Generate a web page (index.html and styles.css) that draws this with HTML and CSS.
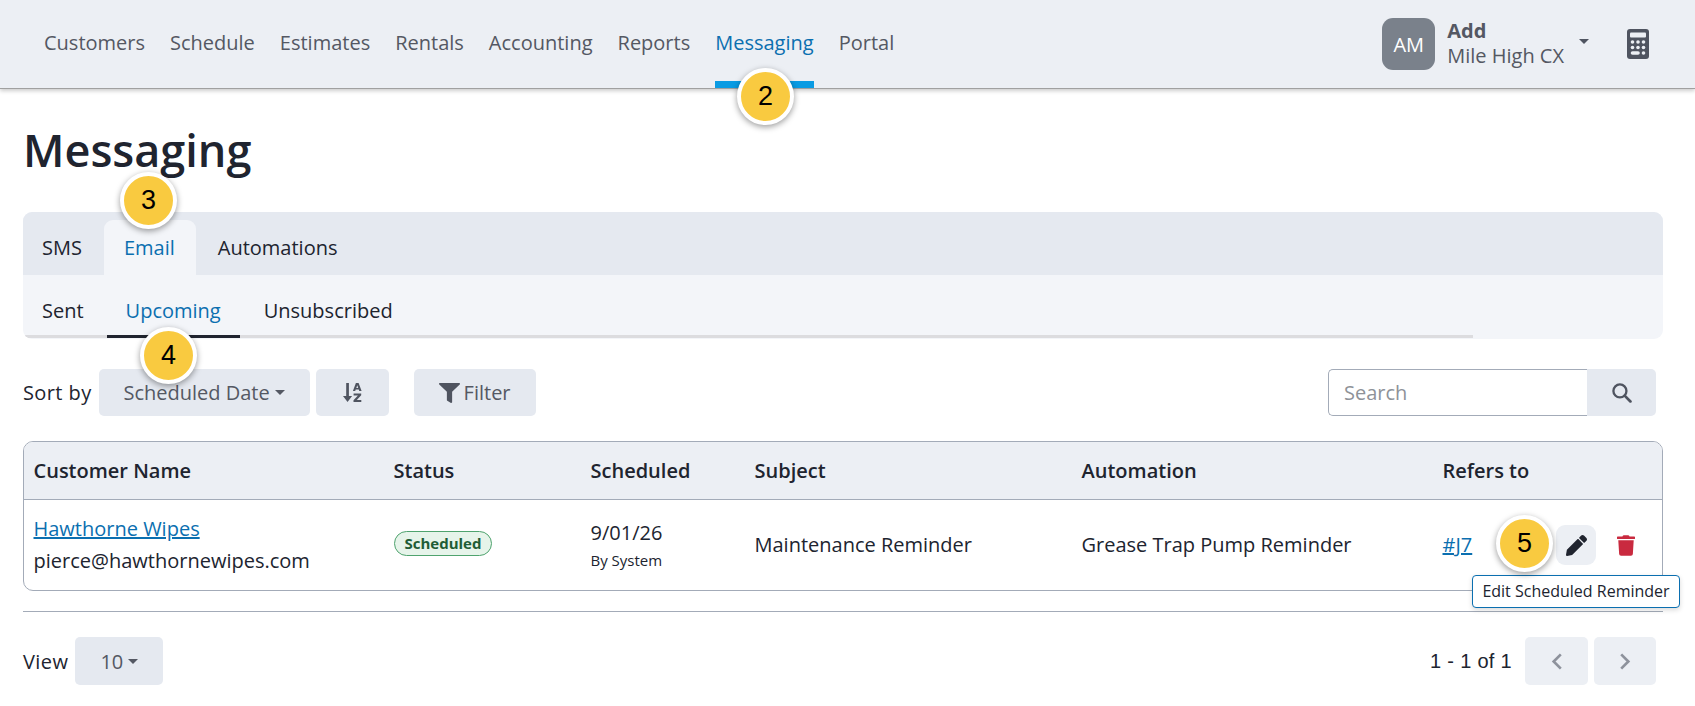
FILE: index.html
```html
<!DOCTYPE html>
<html lang="en">
<head>
<meta charset="utf-8">
<title>Messaging</title>
<link rel="stylesheet" href="styles.css">
</head>
<body>
<header class="topbar">
  <nav class="mainnav">
    <a class="navlink">Customers</a>
    <a class="navlink">Schedule</a>
    <a class="navlink">Estimates</a>
    <a class="navlink">Rentals</a>
    <a class="navlink">Accounting</a>
    <a class="navlink">Reports</a>
    <a class="navlink active">Messaging</a>
    <a class="navlink">Portal</a>
  </nav>
  <div class="account">
    <div class="avatar">AM</div>
    <div class="who"><strong>Add</strong><span>Mile High CX</span></div>
    <span class="caret acct-caret"></span>
    <svg class="calc" viewBox="0 0 22 30"><rect width="22" height="30" rx="3" fill="#4f5460"/><rect x="3" y="3.500" width="16" height="5" rx="1" fill="#eceff4"/><g fill="#eceff4"><circle cx="5.500" cy="13" r="1.800"/><circle cx="11" cy="13" r="1.800"/><circle cx="16.500" cy="13" r="1.800"/><circle cx="5.500" cy="18.500" r="1.800"/><circle cx="11" cy="18.500" r="1.800"/><circle cx="16.500" cy="18.500" r="1.800"/><rect x="3.700" y="22.200" width="9.100" height="3.600" rx="1.800"/><circle cx="16.500" cy="24" r="1.800"/></g></svg>
  </div>
</header>

<main class="page">
  <h1 class="title">Messaging</h1>

  <section class="tabpanel">
    <div class="tabs">
      <a class="tab">SMS</a>
      <a class="tab active">Email</a>
      <a class="tab">Automations</a>
    </div>
    <div class="subtabs">
      <a class="subtab">Sent</a>
      <a class="subtab active">Upcoming</a>
      <a class="subtab">Unsubscribed</a>
    </div>
  </section>

  <div class="toolbar">
    <span class="label">Sort by</span>
    <button class="btn sortsel">Scheduled Date<span class="caret"></span></button>
    <button class="btn sortdir">
      <svg class="ico-sort" viewBox="0 0 19 19"><path fill="#4f5460" d="M3.200 0h2.700v13h3.200l-4.550 6L0 13h3.200z"/><path fill="#4f5460" fill-rule="evenodd" d="M12.900 0h2.700l3 8h-2.300l-.5-1.400h-3.100l-.5 1.400h-2.300zm1.350 2.300-.95 2.600h1.900zM10.600 10.500h7.600v1.800l-4.400 4.600h4.500V19h-7.800v-1.800l4.400-4.600h-4.300z"/></svg>
    </button>
    <button class="btn filter">
      <svg class="ico-filter" viewBox="0 0 512 512" preserveAspectRatio="none"><path fill="#4f5460" d="M487.976 0H24.028C2.710 0-8.047 25.866 7.058 40.971L192 225.941V432c0 7.831 3.821 15.170 10.237 19.662l80 55.980C298.020 518.690 320 507.493 320 487.980V225.941l184.947-184.970C520.021 25.896 509.338 0 487.976 0z"/></svg>
      Filter
    </button>
    <div class="search">
      <input class="search-input" placeholder="Search">
      <button class="search-btn">
        <svg class="ico-search" viewBox="0 0 20 20"><circle cx="8.500" cy="8.500" r="6.200" fill="none" stroke="#4f5460" stroke-width="2.200"/><path d="M13 13l5.500 5.500" stroke="#4f5460" stroke-width="2.600" stroke-linecap="round"/></svg>
      </button>
    </div>
  </div>

  <div class="tablewrap">
    <div class="row head">
      <div>Customer Name</div>
      <div>Status</div>
      <div>Scheduled</div>
      <div>Subject</div>
      <div>Automation</div>
      <div>Refers to</div>
    </div>
    <div class="row body">
      <div class="cust"><a class="link">Hawthorne Wipes</a><span>pierce@hawthornewipes.com</span></div>
      <div class="badgecell"><span class="badge">Scheduled</span></div>
      <div class="sched"><span>9/01/26</span><small>By System</small></div>
      <div>Maintenance Reminder</div>
      <div>Grease Trap Pump Reminder</div>
      <div class="refs">
        <a class="link">#J7</a>
        <span class="iconbtn edit">
          <svg class="ico-pencil" viewBox="0 0 512 512"><path fill="#20242f" d="M497.900 142.100l-46.100 46.100c-4.700 4.700-12.300 4.700-17 0l-111-111c-4.700-4.700-4.700-12.300 0-17l46.100-46.100c18.700-18.700 49.100-18.700 67.900 0l60.100 60.100c18.800 18.700 18.800 49.100 0 67.900zM284.200 99.800L21.600 362.400.4 483.900c-2.900 16.400 11.400 30.600 27.800 27.800l121.500-21.300 262.600-262.600c4.700-4.700 4.700-12.300 0-17l-111-111c-4.800-4.700-12.400-4.700-17.100 0z"/></svg>
        </span>
        <span class="iconbtn trash">
          <svg class="ico-trash" viewBox="0 0 448 512"><path fill="#c92a3f" d="M432 32H312l-9.400-18.700A24 24 0 0 0 281.100 0H166.800a23.700 23.700 0 0 0-21.400 13.300L136 32H16A16 16 0 0 0 0 48v32a16 16 0 0 0 16 16h416a16 16 0 0 0 16-16V48a16 16 0 0 0-16-16zM53.200 467a48 48 0 0 0 47.900 45h245.800a48 48 0 0 0 47.900-45L416 128H32z"/></svg>
        </span>
      </div>
    </div>
  </div>

  <hr class="rule">

  <div class="pager">
    <span class="label">View</span>
    <button class="btn viewsel">10<span class="caret"></span></button>
    <span class="range">1 - 1 of 1</span>
    <button class="pagebtn prev"><svg class="ico-chev" viewBox="0 0 12 20"><path d="M10 2.500 2.500 10l7.500 7.500" fill="none" stroke="#8e929c" stroke-width="2.800"/></svg></button>
    <button class="pagebtn next"><svg class="ico-chev" viewBox="0 0 12 20"><path d="M2 2.500 9.500 10 2 17.500" fill="none" stroke="#8e929c" stroke-width="2.800"/></svg></button>
  </div>
</main>

<div class="tooltip">Edit Scheduled Reminder</div>
<span class="callout c2">2</span>
<span class="callout c3">3</span>
<span class="callout c4">4</span>
<span class="callout c5">5</span>
</body>
</html>
```
FILE: styles.css
```css
* { box-sizing: border-box; }
html, body { margin: 0; padding: 0; }
body {
  background: #fff;
  color: #20242f;
  font-family: "Open Sans", "Liberation Sans", sans-serif;
  font-size: 20px;
  width: 1695px;
  height: 706px;
  overflow: hidden;
  position: relative;
}
button { font-family: inherit; border: 0; margin: 0; cursor: pointer; }

.topbar {
  height: 89px;
  background: #eceff4;
  border-bottom: 1px solid #a0a0a0;
  box-shadow: 0 2px 4px rgba(0,0,0,.2);
  display: flex;
  justify-content: space-between;
  padding-left: 44px;
}
.mainnav { display: flex; gap: 25px; }
.navlink {
  color: #545863;
  padding-top: 29px;
  height: 88px;
  line-height: 28px;
  border-bottom: 7px solid transparent;
}
.navlink.active { color: #0b6fb0; border-bottom-color: #0a9be3; }

.account { display: flex; align-items: flex-start; padding-top: 18px; padding-right: 46px; }
.avatar {
  width: 53px; height: 52px;
  background: #7a818b;
  color: #fff;
  border-radius: 11px;
  display: flex; align-items: center; justify-content: center;
  font-size: 20px;
  margin-right: 12px;
}
.who { display: flex; flex-direction: column; color: #545863; line-height: 25px; }
.who strong { font-weight: 700; }
.caret {
  display: inline-block;
  width: 0; height: 0;
  border-left: 5px solid transparent;
  border-right: 5px solid transparent;
  border-top: 5px solid currentColor;
}
.acct-caret { color: #4f5460; margin: 21px 0 0 15px; }
.calc { width: 22px; height: 30px; margin: 11px 0 0 38px; }

.page { padding: 0 32px 0 23px; }
.title {
  font-size: 45px;
  font-weight: 600;
  line-height: 62px;
  margin: 30px 0 0;
  color: #20242f;
}

.tabpanel {
  margin-top: 31px;
  width: 1640px;
  height: 127px;
  background: #f3f5f9;
  border-radius: 9px;
  overflow: hidden;
}
.tabs {
  height: 63px;
  background: #e5e9f0;
  display: flex;
  align-items: flex-end;
}
.tab {
  height: 55px;
  padding: 13px 21px 0 20px;
  line-height: 30px;
  color: #20242f;
  border-radius: 9px 9px 0 0;
}
.tab.active { background: #f3f5f9; color: #0b6fb0; }
.tab:first-child { padding-left: 19px; padding-right: 22px; }
.tab:last-child { padding-left: 22px; }
.subtabs {
  display: flex;
  height: 63px;
  width: 1450px;
  border-bottom: 3px solid #dcdcdf;
}
.subtab {
  height: 63px;
  padding: 22px 19px 0;
  line-height: 28px;
  color: #20242f;
}
.subtab:first-child { padding-right: 23px; }
.subtab.active { color: #0b6fb0; border-bottom: 3px solid #20242f; margin-right: 5px; }

.toolbar {
  margin-top: 30px;
  display: flex;
  align-items: center;
  height: 47px;
  width: 1633px;
}
.label { color: #20242f; letter-spacing: .4px; }
.btn {
  background: #e5e9f0;
  color: #545863;
  font-size: 20px;
  height: 47px;
  border-radius: 5px;
  display: inline-flex;
  align-items: center;
  justify-content: center;
}
.btn .caret { margin-left: 5px; }
.sortsel { width: 211px; margin-left: 7px; }
.sortdir { width: 73px; margin-left: 6px; }
.filter { width: 122px; margin-left: 25px; gap: 4px; }
.ico-sort { width: 19px; height: 19px; }
.ico-filter { width: 21px; height: 20px; }
.search { margin-left: auto; display: flex; height: 47px; }
.search-input {
  width: 259px; height: 47px;
  border: 1px solid #a3abb8;
  border-right: 0;
  border-radius: 5px 0 0 5px;
  padding: 0 15px;
  font: 20px "Open Sans", sans-serif;
  color: #20242f;
  background: #fff;
  outline: 0;
}
.search-input::placeholder { color: #8e9298; opacity: 1; }
.search-btn {
  width: 69px; height: 47px;
  background: #e5e9f0;
  border-radius: 0 5px 5px 0;
  display: flex; align-items: center; justify-content: center;
}
.ico-search { width: 21px; height: 21px; }

.tablewrap {
  margin-top: 25px;
  width: 1640px;
  height: 150px;
  border: 1px solid #a3abb8;
  border-radius: 10px;
  overflow: hidden;
}
.row {
  display: grid;
  grid-template-columns: 360px 197px 164px 327px 361px 1fr;
  padding-left: 9.500px;
  align-items: center;
}
.row.head {
  height: 58px;
  background: #eceff4;
  border-bottom: 1px solid #a3abb8;
  font-weight: 600;
}
.row.body { height: 90px; padding-bottom: 2px; }
.cust { display: flex; flex-direction: column; line-height: 32px; padding-top: 2px; }
.link { color: #0b6fb0; text-decoration: underline; }
.badgecell { display: flex; padding-bottom: 1px; }
.badge {
  display: inline-block;
  height: 25px;
  line-height: 23px;
  padding: 0 10px;
  border: 1px solid #4fa36e;
  border-radius: 13px;
  background: #e6f4ea;
  color: #1f5c36;
  font-size: 15px;
  font-weight: 700;
}
.sched { display: flex; flex-direction: column; line-height: 28px; padding-top: 4px; }
.sched small { font-size: 15px; color: #20242f; line-height: 26px; }
.refs { display: flex; align-items: center; padding-top: 2px; }
.refs .link { margin-bottom: 2px; }
.iconbtn {
  width: 40px; height: 40px;
  border-radius: 9px;
  display: flex; align-items: center; justify-content: center;
}
.edit { background: #eceff4; margin-left: 84px; }
.trash { margin-left: 10px; }
.ico-pencil { width: 21px; height: 21px; }
.ico-trash { width: 18px; height: 21px; }

.rule { border: 0; border-top: 1px solid #a3abb8; margin: 20px 0 0; width: 1640px; }
.pager { margin-top: 25px; display: flex; align-items: center; height: 48px; width: 1633px; }
.viewsel { width: 88px; height: 48px; margin-left: 7px; }
.range {
  margin-left: auto;
  color: #20242f;
  margin-right: 13px;
  letter-spacing: .3px;
  font-family: "Liberation Sans", Arial, sans-serif;
}
.pagebtn {
  width: 63px; height: 48px;
  background: #eceff4;
  border-radius: 5px;
  display: flex; align-items: center; justify-content: center;
}
.pagebtn.prev { margin-right: 6px; }
.pagebtn.next { width: 62px; }
.ico-chev { width: 12px; height: 19px; }

.tooltip {
  position: absolute;
  left: 1472px; top: 575px;
  width: 208px; height: 33px;
  background: #fff;
  border: 1px solid #0b6fb0;
  border-radius: 4px;
  box-shadow: 0 2px 5px rgba(0,0,0,.15);
  font-size: 16px;
  line-height: 31px;
  text-align: center;
  color: #20242f;
}
.callout {
  position: absolute;
  width: 57px; height: 57px;
  border-radius: 50%;
  background: #f9ca40;
  border: 4px solid #fff;
  box-shadow: 0 2px 6px rgba(0,0,0,.4);
  color: #000;
  font-family: "Liberation Sans", Arial, sans-serif;
  font-size: 27px;
  display: flex; align-items: center; justify-content: center;
}
.c2 { left: 737px; top: 68px; }
.c3 { left: 120px; top: 172px; }
.c4 { left: 140px; top: 327px; }
.c5 { left: 1496px; top: 515px; }
```
